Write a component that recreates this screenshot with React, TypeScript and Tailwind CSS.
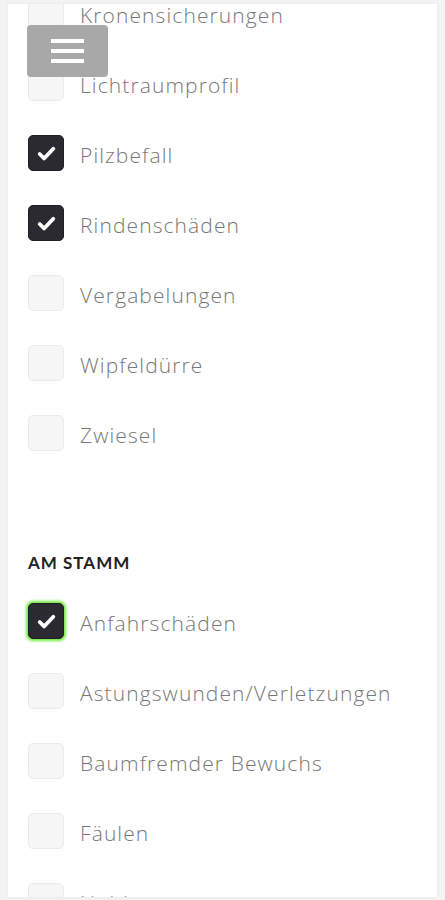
import React, { useState } from 'react';

const krone = [
  { label: 'Kronensicherungen', checked: false },
  { label: 'Lichtraumprofil', checked: false },
  { label: 'Pilzbefall', checked: true },
  { label: 'Rindenschäden', checked: true },
  { label: 'Vergabelungen', checked: false },
  { label: 'Wipfeldürre', checked: false },
  { label: 'Zwiesel', checked: false },
];

const stamm = [
  { label: 'Anfahrschäden', checked: true, focus: true },
  { label: 'Astungswunden/Verletzungen', checked: false },
  { label: 'Baumfremder Bewuchs', checked: false },
  { label: 'Fäulen', checked: false },
  { label: 'Hohlungen', checked: false },
];

type Item = { label: string; checked: boolean; focus?: boolean };

const CheckRow: React.FC<{ item: Item }> = ({ item }) => {
  const [on, setOn] = useState(item.checked);
  return (
    <label className="flex h-9 items-center gap-[16px] cursor-pointer">
      <span
        onClick={() => setOn(!on)}
        className={
          'flex h-9 w-9 shrink-0 items-center justify-center rounded-[5px] border ' +
          (on ? 'bg-[#2b2a30] border-[#1f1e24] ' : 'bg-[#f6f6f6] border-[#ebebeb] ') +
          (item.focus ? 'shadow-[0_0_3px_2px_#6ee83a]' : '')
        }
      >
        {on && (
          <svg width="21" height="21" viewBox="0 0 20 20" fill="none">
            <path d="M3.5 10.5l4.2 4.2L16.5 5.5" stroke="#fff" strokeWidth="3.6" strokeLinecap="round" strokeLinejoin="round" />
          </svg>
        )}
      </span>
      <span className="pt-[5px] text-[21px] font-light text-[#777] tracking-[1.1px]" style={{ fontFamily: '"Open Sans", Lato, sans-serif' }}>
        {item.label}
      </span>
    </label>
  );
};

export default function App() {
  return (
    <div className="relative min-h-screen bg-[#f3f3f3] px-2 pt-1 pb-[3px]" style={{ fontFamily: 'Lato, "Open Sans", sans-serif' }}>
      <div className="h-[893px] overflow-hidden bg-white shadow-[0_0_3px_rgba(0,0,0,0.06)]">
        <div className="-mt-[9px] pl-5">
          <div className="flex flex-col gap-[34px]">
            {krone.map((it) => (
              <CheckRow key={it.label} item={it} />
            ))}
          </div>
          <h3 className="mt-[100px] mb-[28px] h-6 text-[17px] font-bold leading-6 text-[#222] uppercase tracking-[1px]">Am Stamm</h3>
          <div className="flex flex-col gap-[34px]">
            {stamm.map((it) => (
              <CheckRow key={it.label} item={it} />
            ))}
          </div>
        </div>
      </div>
      <button className="absolute left-[27px] top-[25px] flex h-[52px] w-[81px] flex-col items-center justify-center gap-[6px] rounded-[4px] bg-[#a8a8a8]">
        <span className="block h-[4px] w-[33px] bg-white" />
        <span className="block h-[4px] w-[33px] bg-white" />
        <span className="block h-[4px] w-[33px] bg-white" />
      </button>
    </div>
  );
}
